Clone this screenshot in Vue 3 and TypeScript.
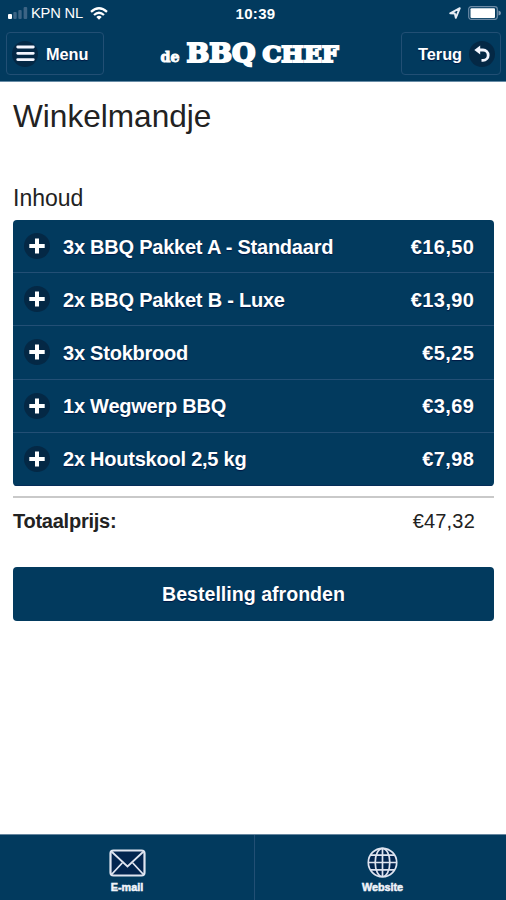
<script setup lang="ts">
interface CartItem {
  quantity: number
  name: string
  price: number
}

const items: CartItem[] = [
  { quantity: 3, name: 'BBQ Pakket A - Standaard', price: 16.5 },
  { quantity: 2, name: 'BBQ Pakket B - Luxe', price: 13.9 },
  { quantity: 3, name: 'Stokbrood', price: 5.25 },
  { quantity: 1, name: 'Wegwerp BBQ', price: 3.69 },
  { quantity: 2, name: 'Houtskool 2,5 kg', price: 7.98 },
]

const total = 47.32

function euro(value: number): string {
  return '€' + value.toFixed(2).replace('.', ',')
}
</script>

<template>
  <div class="screen">
    <header class="top">
      <div class="status">
        <div class="carrier">
          <svg class="signal" width="20" height="12" viewBox="0 0 20 12">
            <rect x="0" y="7" width="4" height="5" rx="1" fill="#fff" />
            <rect x="5.3" y="5" width="3.4" height="7" rx="1" fill="#3d6484" />
            <rect x="10.3" y="3" width="3.4" height="9" rx="1" fill="#3d6484" />
            <rect x="15.6" y="0" width="3.6" height="12" rx="1" fill="#3d6484" />
          </svg>
          <span class="network">KPN NL</span>
          <svg class="wifi" width="18" height="13" viewBox="0 0 18 13" fill="none" stroke="#fff" stroke-width="2.3">
            <path d="M1 4.8Q9-2.2 17 4.8" />
            <path d="M4 8Q9 3.6 14 8" />
            <path d="M6.3 10Q9 7.4 11.7 10L9 12.8Z" fill="#fff" stroke="none" />
          </svg>
        </div>
        <span class="clock">10:39</span>
        <div class="power">
          <svg width="12" height="12" viewBox="0 0 12 12" fill="none" stroke="#e8edf5" stroke-width="1.9" stroke-linejoin="round">
            <path d="M1.2 6.3L10.8 1.2L6.8 10.8L5.8 6.5Z" />
          </svg>
          <svg width="33" height="14" viewBox="0 0 33 14">
            <rect x="0.7" y="0.7" width="28.6" height="12.6" rx="2.5" fill="none" stroke="#6d8ba6" stroke-width="1.2" />
            <rect x="2.5" y="2.3" width="24.5" height="9.6" rx="1" fill="#fff" />
            <path d="M30.5 4.5Q33 5 33 7T30.5 9.5Z" fill="#7f99b1" />
          </svg>
        </div>
      </div>
      <nav class="toolbar">
        <button class="tool menu">
          <span class="disc">
            <svg width="19" height="17" viewBox="0 0 19 17" stroke="#f4f6ff" stroke-width="2.8" stroke-linecap="round">
              <path d="M1.7 2H17.3M1.7 8.3H17.3M1.7 14.6H17.3" />
            </svg>
          </span>
          <span class="label">Menu</span>
        </button>
        <svg class="logo" width="184" height="42" viewBox="0 0 184 42">
          <text class="word de" x="0.5" y="29.5" textLength="19" lengthAdjust="spacingAndGlyphs">de</text>
          <text class="word bbq" x="26.5" y="29.5" textLength="69" lengthAdjust="spacingAndGlyphs">BBQ</text>
          <text class="word chef" x="102.5" y="29.5" textLength="76" lengthAdjust="spacingAndGlyphs">CHEF</text>
        </svg>
        <button class="tool back">
          <span class="label">Terug</span>
          <span class="disc">
            <svg width="16" height="18" viewBox="0 0 16 18" fill="none">
              <path d="M4.5 5H9A5 5 0 0 1 9 15.4H7.5" stroke="#f4f6ff" stroke-width="2.8" />
              <path d="M0.3 5L6.2 0.5V9.5Z" fill="#f4f6ff" />
            </svg>
          </span>
        </button>
      </nav>
    </header>

    <main class="content">
      <h1>Winkelmandje</h1>
      <h2>Inhoud</h2>
      <ul class="cart">
        <li v-for="item in items" :key="item.name" class="row">
          <span class="disc">
            <svg width="16" height="16" viewBox="0 0 16 16" stroke="#fff" stroke-width="4">
              <path d="M8 0.5V15.5M0.3 8H15.7" />
            </svg>
          </span>
          <span class="name">{{ item.quantity }}x {{ item.name }}</span>
          <span class="price">{{ euro(item.price) }}</span>
        </li>
      </ul>
      <div class="total">
        <strong>Totaalprijs:</strong>
        <span>{{ euro(total) }}</span>
      </div>
      <button class="checkout">Bestelling afronden</button>
    </main>

    <footer class="tabs">
      <a class="tab">
        <svg width="37" height="28" viewBox="0 0 37 28" fill="none" stroke="#dfe4f0">
          <rect x="1.5" y="1.5" width="34" height="25" rx="3" fill="#03254f" stroke-width="2.2" />
          <path d="M3 3L18.5 17.5L34 3M3 25L13.2 14M34 25L23.8 14" stroke-width="1.8" />
        </svg>
        <span>E-mail</span>
      </a>
      <a class="tab">
        <svg width="31" height="31" viewBox="0 0 31 31" fill="none" stroke="#dfe4f0" stroke-width="1.7">
          <circle cx="15.5" cy="15.5" r="14.2" fill="#03254f" />
          <ellipse cx="15.5" cy="15.5" rx="7.3" ry="14.2" />
          <path d="M15.5 1.3V29.7M1.3 15.5H29.7M3.5 8.2H27.5M3.5 22.8H27.5" />
        </svg>
        <span>Website</span>
      </a>
    </footer>
  </div>
</template>

<style>
body {
  margin: 0;
  background: #fff;
}
</style>

<style scoped>
.screen {
  display: flex;
  flex-direction: column;
  height: 900px;
  font-family: 'Liberation Sans', Arial, sans-serif;
  color: #222;
}

.top {
  box-sizing: border-box;
  height: 82px;
  background: #023a5e;
  border-bottom: 1px solid #678ba5;
  color: #fff;
}

.status {
  display: grid;
  grid-template-columns: 1fr auto 1fr;
  align-items: center;
  height: 26px;
  padding: 0 5px 0 8px;
}

.carrier,
.power {
  display: flex;
  align-items: center;
}

.network {
  margin: 0 7px 0 3px;
  font-size: 14.7px;
  letter-spacing: -0.2px;
}

.clock {
  padding-left: 2px;
  font-size: 15px;
  font-weight: bold;
  letter-spacing: 0.3px;
}

.power {
  justify-content: flex-end;
  gap: 7px;
}

.toolbar {
  display: flex;
  justify-content: space-between;
  align-items: flex-start;
  padding: 6px 5px 0 6px;
}

.tool {
  box-sizing: border-box;
  display: flex;
  align-items: center;
  height: 43px;
  margin: 0;
  border: 1px solid #224f74;
  border-radius: 4px;
  background: transparent;
  color: #fff;
  font: bold 16.3px 'Liberation Sans', Arial, sans-serif;
  text-shadow: 0 1px 1px #001844;
}

.label {
  padding-top: 2px;
}

.menu {
  width: 98px;
  padding: 0 0 0 5px;
  gap: 8px;
}

.back {
  width: 100px;
  padding: 0 0 0 16px;
  gap: 7px;
}

.disc {
  display: flex;
  flex: none;
  align-items: center;
  justify-content: center;
  width: 26px;
  height: 26px;
  border-radius: 50%;
  background: #042845;
}

.logo {
  margin-left: -1px;
}

.word {
  fill: #fff;
  stroke: #fff;
  font-family: 'DejaVu Serif', serif;
  font-weight: bold;
}

.de {
  font-size: 14.5px;
  stroke-width: 0.9px;
}

.bbq {
  font-size: 25.5px;
  stroke-width: 2px;
}

.chef {
  font-size: 22px;
  stroke-width: 2px;
}

.content {
  flex: 1;
  padding: 0 12px 0 13px;
}

h1 {
  margin: 15px 0 0;
  font-size: 31.6px;
  line-height: 38px;
  font-weight: normal;
}

h2 {
  margin: 49px 0 8px;
  font-size: 23px;
  line-height: 28px;
  font-weight: normal;
}

.cart {
  margin: 0;
  padding: 0;
  list-style: none;
  border-radius: 4px;
  overflow: hidden;
  background: #023a5e;
}

.row {
  box-sizing: border-box;
  display: flex;
  align-items: center;
  height: 53.2px;
  padding: 0 20px 0 11px;
  border-bottom: 1px solid #234f75;
  color: #fff;
  font-size: 20px;
  font-weight: bold;
  text-shadow: 0 1px 1px #001844;
}

.row:last-child {
  border-bottom-color: #052c58;
}

.name {
  flex: 1;
  margin-left: 13px;
  padding-top: 2px;
  letter-spacing: -0.23px;
}

.price {
  margin-right: -0.4px;
  padding-top: 2px;
  letter-spacing: 0.4px;
}

.total {
  display: flex;
  justify-content: space-between;
  margin-top: 10px;
  padding: 11px 19px 1px 0;
  border-top: 2px solid #c9c9c9;
  font-size: 20px;
  line-height: 24px;
}

.total strong {
  letter-spacing: -0.25px;
}

.total span {
  letter-spacing: 0.2px;
}

.checkout {
  display: block;
  width: 100%;
  height: 54px;
  margin: 33px 0 0;
  padding: 2px 0 0;
  border: 0;
  border-radius: 4px;
  background: #023a5e;
  color: #fff;
  font: bold 19.6px 'Liberation Sans', Arial, sans-serif;
  text-shadow: 0 1px 1px #001844;
}

.tabs {
  box-sizing: border-box;
  display: grid;
  grid-template-columns: 255px 1fr;
  height: 66px;
  border-top: 1px solid #66869f;
  background: #023a5e;
}

.tab {
  display: flex;
  flex-direction: column;
  align-items: center;
  justify-content: flex-end;
  gap: 4px;
  padding-bottom: 7px;
  color: #f0f3fa;
  font-size: 10.8px;
  line-height: 12px;
  font-weight: bold;
  -webkit-text-stroke: 0.5px #f0f3fa;
}

.tab:first-child {
  border-right: 1px solid #224f74;
}

.tab:last-child {
  gap: 3px;
  padding-left: 4px;
}
</style>
